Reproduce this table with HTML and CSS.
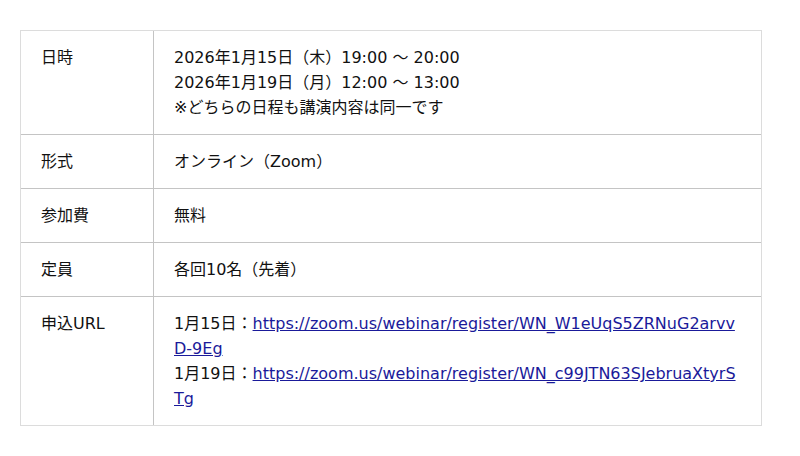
FILE: index.html
```html
<!DOCTYPE html>
<html lang="ja">
<head>
<meta charset="utf-8">
<title>イベント概要</title>
<link rel="stylesheet" href="styles.css">
</head>
<body>
<table class="info">
  <tbody>
    <tr>
      <th>日時</th>
      <td>2026年1月15日（木）19:00 〜 20:00<br>2026年1月19日（月）12:00 〜 13:00<br>※どちらの日程も講演内容は同一です</td>
    </tr>
    <tr>
      <th>形式</th>
      <td>オンライン（Zoom）</td>
    </tr>
    <tr>
      <th>参加費</th>
      <td>無料</td>
    </tr>
    <tr>
      <th>定員</th>
      <td>各回10名（先着）</td>
    </tr>
    <tr>
      <th>申込URL</th>
      <td>1月15日：<a href="#">https://zoom.us/webinar/register/WN_W1eUqS5ZRNuG2arvvD-9Eg</a><br>1月19日：<a href="#">https://zoom.us/webinar/register/WN_c99JTN63SJebruaXtyrSTg</a></td>
    </tr>
  </tbody>
</table>
</body>
</html>
```

FILE: styles.css
```css
html, body {
  margin: 0;
  padding: 0;
  background: #fff;
}
body {
  padding: 30px 20px;
  font-family: "DejaVu Sans", "Noto Sans CJK JP", sans-serif;
  font-size: 16px;
  line-height: 25px;
  color: #111;
}
.info {
  width: 742px;
  border-collapse: separate;
  border-spacing: 0;
  border: 1px solid #dcdcdc;
}
.info th,
.info td {
  padding: 14px 20px;
  text-align: left;
  vertical-align: top;
  font-weight: normal;
  border-bottom: 1px solid #c4c4c4;
}
.info tr:last-child th,
.info tr:last-child td {
  border-bottom: none;
}
.info th {
  width: 92px;
  border-right: 1px solid #c4c4c4;
}
.info td {
  word-break: break-all;
}
.info a {
  color: #1a1a9a;
  text-decoration: underline;
}
```
